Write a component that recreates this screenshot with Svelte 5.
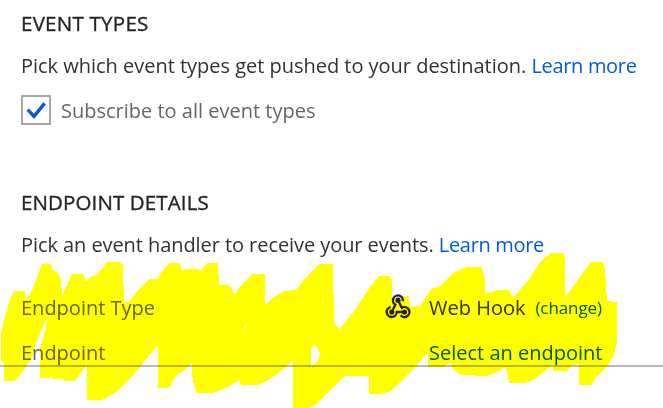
<script>
  const marker = "M4 381L4 362L1 361L1 333L5 317L9 302L14 291L25 291L26 300L33 288L42 264L51 264L53 270L58 273L61 279L62 296L72 274L83 274L86 282L90 277L97 275L107 262L119 262L123 265L124 302L129 302L138 290L150 279L158 279L160 274L169 263L180 263L182 271L186 269L197 269L200 272L207 263L218 263L219 285L228 285L232 288L234 295L243 283L253 274L265 274L265 305L273 298L284 291L296 290L307 276L320 264L333 264L334 322L337 327L340 329L357 307L370 287L379 276L389 276L392 280L392 298L395 301L400 301L402 296L409 296L410 307L420 306L432 288L439 287L453 273L467 267L481 267L485 278L485 294L497 290L509 290L513 298L530 278L540 262L551 253L563 253L565 258L565 298L580 277L591 262L603 262L605 270L607 301L617 302L617 342L614 355L607 367L596 377L592 385L579 385L579 364L572 365L567 371L553 371L553 364L545 371L535 379L525 383L509 383L506 367L497 372L487 376L462 375L455 371L450 363L443 367L428 367L428 352L417 365L400 383L390 391L382 394L369 394L369 376L344 376L317 404L309 408L293 408L293 361L277 374L267 381L258 385L241 385L239 380L228 387L213 393L197 393L195 388L192 375L192 363L182 372L177 374L169 388L158 388L158 345L143 363L130 379L115 393L102 400L87 400L87 364L77 378L74 381L64 381L63 379L52 379L52 375L50 378L40 378L40 349L46 328L47 318L45 322L35 345L32 358L20 375L15 381Z M311 348L314 345L318 349L320 353L319 359L311 367Z M247 324L245 325L243 331Z M538 320L541 318L540 317Z M320 304h2v-1z";
</script>

<main>
  <section class="types">
    <h2 class="wide">EVENT TYPES</h2>
    <p>Pick which event types get pushed to your destination. <a href="#types">Learn more</a></p>
    <div class="check">
      <span class="box" role="checkbox" aria-checked="true" aria-label="Subscribe to all event types" tabindex="0">
        <svg width="26" height="26" viewBox="0 0 26 26"><path d="M4.8 12.6L11 19.4L21.6 6.4" fill="none" stroke="#015cda" stroke-width="3.4" /></svg>
      </span>
      <span class="caption">Subscribe to all event types</span>
    </div>
  </section>
  <section class="details">
    <h2>ENDPOINT DETAILS</h2>
    <p class="second">Pick an event handler to receive your events. <a href="#details">Learn more</a></p>
    <div class="row">
      <span class="label">Endpoint Type</span>
      <svg class="hook" width="26" height="25" viewBox="0 0 26 25">
        <g fill="none" stroke="#252525" stroke-width="2.3">
          <path d="M6.7 18L10.4 10.8A5 5 0 1 1 17.9 7.3" />
          <path d="M13 6.2L16.8 13.8A5 5 0 1 1 15.6 21.3" />
          <path d="M19.5 18H11.7A5 5 0 1 1 5.6 13.1" />
        </g>
        <g fill="#252525"><circle cx="13" cy="6.2" r="2.6" /><circle cx="6.7" cy="18" r="2.6" /><circle cx="19.5" cy="18" r="2.6" /></g>
      </svg>
      <span>Web Hook</span>
      <a class="change" href="#change">(change)</a>
    </div>
    <div class="row last">
      <span class="label">Endpoint</span>
      <a href="#endpoint">Select an endpoint</a>
    </div>
  </section>
  <svg class="marker" width="663" height="408" viewBox="0 0 663 408"><path d={marker} fill="#ff0" fill-rule="evenodd" shape-rendering="crispEdges" /></svg>
</main>

<style>
  main {
    box-sizing: border-box;
    position: relative;
    width: 663px;
    height: 408px;
    padding-top: 9px;
    overflow: hidden;
    background: #fff;
    color: #323232;
    font: 20px/28px "Open Sans", "Noto Sans", sans-serif;
    white-space: nowrap;
  }
  h2 {
    margin: 0 0 15px 21px;
    color: #252525;
    font-size: 20.5px;
    font-weight: 500;
    line-height: 28px;
    letter-spacing: 0.12px;
    -webkit-text-stroke: 0.35px #252525;
  }
  h2.wide { letter-spacing: 0.25px; }
  p { margin: 0 0 0 21px; letter-spacing: -0.02px; }
  a { color: #015cda; text-decoration: none; }
  p a { letter-spacing: -0.32px; }
  p.second { letter-spacing: -0.07px; }
  .check {
    display: flex;
    align-items: center;
    gap: 10px;
    margin: 14px 0 0 21px;
    height: 32px;
    color: #666;
  }
  .box {
    box-sizing: border-box;
    width: 30px;
    height: 30px;
    border: 2px solid #a6a6a6;
  }
  .box svg { display: block; }
  .caption { padding-top: 2px; }
  .details { margin-top: 62px; }
  .row {
    display: flex;
    height: 28px;
    padding-left: 21px;
  }
  .second + .row { margin: 35px 0 17px; }
  .label { flex: none; width: 408px; color: #666; }
  .row:not(.last) .label { width: 364px; }
  .hook { margin: 0 18px 0 0; flex: none; }
  .change { margin-left: 10px; font-size: 17px; letter-spacing: -0.1px; }
  .last { height: 26px; border-bottom: 2px solid #b8b8b8; }
  .marker {
    position: absolute;
    top: 0;
    left: 0;
    mix-blend-mode: multiply;
    pointer-events: none;
  }
</style>
